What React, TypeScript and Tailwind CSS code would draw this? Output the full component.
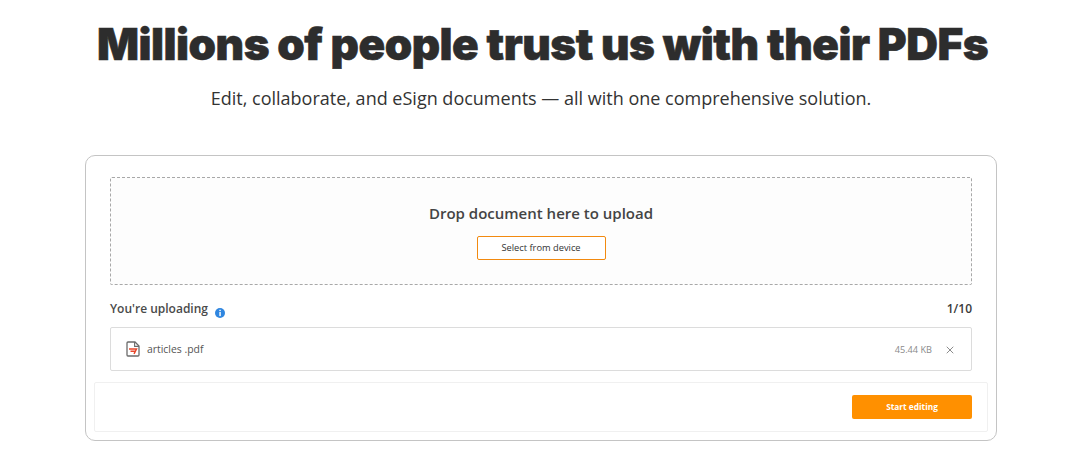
import React from 'react';
import { X } from 'lucide-react';

const PdfIcon = () => (
  <svg width="14" height="16" viewBox="0 0 14 16" fill="none" className="shrink-0">
    <path d="M1 2a1 1 0 0 1 1-1h7l4 4v9a1 1 0 0 1-1 1H2a1 1 0 0 1-1-1V2z" stroke="#6b6b6b" strokeWidth="1.3" />
    <path d="M8.6 1v4.4H13" stroke="#6b6b6b" strokeWidth="1.1" />
    <path d="M3 8h7.5L8 12.8M4.5 10.2H9" stroke="#e8472b" strokeWidth="1.5" />
  </svg>
);

const InfoIcon = () => (
  <svg width="10" height="10" viewBox="0 0 9 9" className="block shrink-0">
    <circle cx="4.5" cy="4.5" r="4.5" fill="#2f86e0" />
    <rect x="3.9" y="1.6" width="1.3" height="1.2" fill="#fff" />
    <rect x="3.9" y="3.6" width="1.3" height="3.7" fill="#fff" />
  </svg>
);

export default function App() {
  return (
    <div className="w-[1078px] h-[464px] bg-white overflow-hidden font-['Open_Sans',sans-serif] text-[#333]">
      <div className="flex flex-col items-center pl-[4px]">
        <h1 className="mt-[18px] ml-[3px] h-[52px] font-['Inter',sans-serif] font-black text-[44px] leading-[52px] tracking-[-0.5px] [-webkit-text-stroke:0.6px_#2d2d2d] text-[#2d2d2d] whitespace-nowrap">
          Millions of people trust us with their PDFs
        </h1>
        <p className="mt-[15px] text-[18px] leading-[26px] text-[#333]">
          Edit, collaborate, and eSign documents — all with one comprehensive solution.
        </p>
      </div>

      <div className="mt-[44px] ml-[85px] w-[912px] h-[286px] border border-[#c4c4c4] rounded-[10px] flex flex-col">
        <div className="mt-[21px] ml-[24px] w-[862px] h-[108px] border border-dashed border-[#a8a8a8] rounded-[2px] bg-[#fdfdfd] flex flex-col items-center">
          <div className="mt-[25px] text-[15px] leading-[20px] font-semibold text-[#444]">Drop document here to upload</div>
          <button className="mt-[13px] w-[129px] h-[24px] border border-[#f28a10] rounded-[2px] bg-white text-[9.3px] font-medium text-[#333] leading-none">
            Select from device
          </button>
        </div>

        <div className="mt-[16px] ml-[24px] w-[862px] h-[16px] flex items-center justify-between">
          <div className="flex items-center gap-[7px]">
            <span className="text-[12px] font-semibold text-[#4a4a4a] leading-[16px]">You're uploading</span>
            <span className="translate-y-[4px]"><InfoIcon /></span>
          </div>
          <span className="text-[12px] font-semibold text-[#3a3a3a] leading-[16px]">1/10</span>
        </div>

        <div className="mt-[10px] ml-[24px] w-[862px] h-[44px] border border-[#dcdcdc] rounded-[2px] flex items-center pl-[15px] pr-[15px]">
          <PdfIcon />
          <span className="ml-[7px] translate-y-[1px] text-[10.4px] text-[#555]">articles .pdf</span>
          <span className="ml-auto translate-y-[1px] text-[9.2px] text-[#8a8a8a]">45.44 KB</span>
          <X size={12} strokeWidth={1.5} className="ml-[12px] translate-y-[1px] text-[#666]" />
        </div>

        <div className="mt-[11px] ml-[8px] w-[894px] h-[50px] border border-[#f0f0f0] rounded-[2px] flex items-center justify-end pr-[15px]">
          <button className="w-[120px] h-[24px] bg-[#ff9000] rounded-[2px] text-white text-[8.3px] font-bold leading-none">
            Start editing
          </button>
        </div>
      </div>
    </div>
  );
}
